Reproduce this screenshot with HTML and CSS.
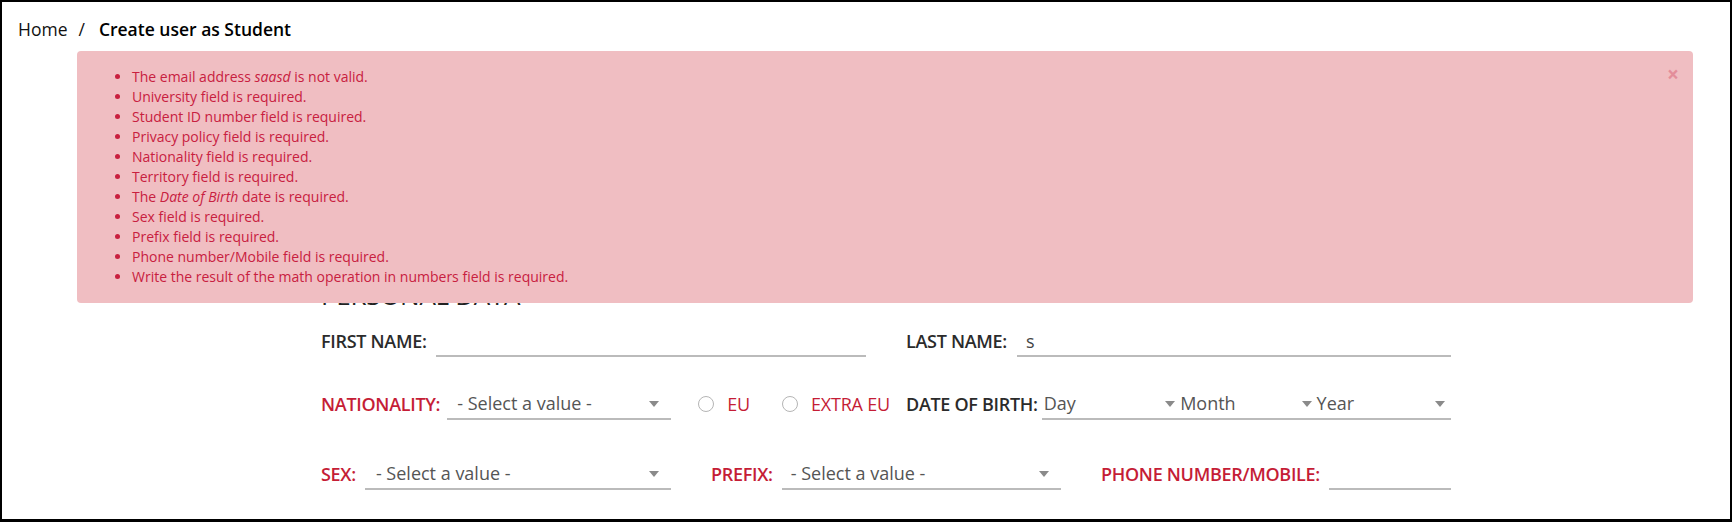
FILE: index.html
```html
<!DOCTYPE html>
<html lang="en">
<head>
<meta charset="utf-8">
<title>Create user as Student</title>
<link rel="stylesheet" href="styles.css">
</head>
<body>
<div class="page">
  <nav class="breadcrumb">
    <a class="crumb" href="#">Home</a><span class="sep">/</span><span class="crumb current">Create user as Student</span>
  </nav>

  <div class="alert" role="alert">
    <button class="close" type="button" aria-label="Close">&times;</button>
    <ul>
      <li>The email address <em>saasd</em> is not valid.</li>
      <li>University field is required.</li>
      <li>Student ID number field is required.</li>
      <li>Privacy policy field is required.</li>
      <li>Nationality field is required.</li>
      <li>Territory field is required.</li>
      <li>The <em>Date of Birth</em> date is required.</li>
      <li>Sex field is required.</li>
      <li>Prefix field is required.</li>
      <li>Phone number/Mobile field is required.</li>
      <li>Write the result of the math operation in numbers field is required.</li>
    </ul>
  </div>

  <form class="form">
    <h2 class="section-title">PERSONAL DATA</h2>

    <div class="row row-2">
      <div class="field">
        <label class="label">FIRST NAME:</label>
        <input class="text-input" type="text" value="">
      </div>
      <div class="field">
        <label class="label label-wide">LAST NAME:</label>
        <input class="text-input input-value" type="text" value="s">
      </div>
    </div>

    <div class="row row-2 row-mid">
      <div class="field">
        <label class="label required label-nat">NATIONALITY:</label>
        <div class="select select-nat">- Select a value -<span class="caret"></span></div>
        <span class="radio radio-first"><span class="radio-dot"></span>EU</span>
        <span class="radio"><span class="radio-dot"></span>EXTRA EU</span>
      </div>
      <div class="field">
        <label class="label label-tight">DATE OF BIRTH:</label>
        <div class="dob">
          <div class="select select-compact">Day<span class="caret"></span></div>
          <div class="select select-compact">Month<span class="caret"></span></div>
          <div class="select select-compact">Year<span class="caret caret-last"></span></div>
        </div>
      </div>
    </div>

    <div class="row row-3 row-last">
      <div class="field">
        <label class="label required">SEX:</label>
        <div class="select">- Select a value -<span class="caret"></span></div>
      </div>
      <div class="field">
        <label class="label required">PREFIX:</label>
        <div class="select select-prefix">- Select a value -<span class="caret"></span></div>
      </div>
      <div class="field">
        <label class="label required">PHONE NUMBER/MOBILE:</label>
        <input class="text-input" type="text" value="">
      </div>
    </div>
  </form>
</div>
</body>
</html>
```

FILE: styles.css
```css
html, body {
  margin: 0;
  padding: 0;
}

body {
  font-family: "Open Sans", "Noto Sans", sans-serif;
  background: #ffffff;
  color: #222;
  border: solid #000;
  border-width: 2px 2px 3px 2px;
  height: 522px;
  box-sizing: border-box;
  overflow: hidden;
}

.page {
  position: relative;
  height: 100%;
}

/* Breadcrumb */
.breadcrumb {
  display: flex;
  align-items: baseline;
  padding: 15px 16px 0;
  font-size: 17.5px;
  line-height: 24px;
  color: #111;
}

.crumb {
  color: #111;
  text-decoration: none;
}

.sep {
  margin: 0 14px 0 11px;
  color: #111;
}

.current {
  font-weight: 600;
  color: #000;
}

/* Alert overlay */
.alert {
  position: absolute;
  left: 75px;
  top: 49px;
  width: 1616px;
  box-sizing: border-box;
  padding: 16px 15px;
  background: #f0bec2;
  color: #c8203f;
  border-radius: 4px;
  font-size: 14px;
  line-height: 20px;
  z-index: 2;
}

.alert ul {
  margin: 0;
  padding-left: 40px;
}

.close {
  position: absolute;
  top: 13px;
  right: 14px;
  padding: 0;
  border: 0;
  background: transparent;
  font-family: "Open Sans", sans-serif;
  font-size: 21px;
  font-weight: 700;
  line-height: 21px;
  color: #c8203f;
  opacity: 0.3;
  cursor: pointer;
}

/* Form */
.form {
  margin: 239px 0 0 319px;
  width: 1130px;
}

.section-title {
  margin: 0 0 16px;
  font-size: 26px;
  line-height: 30px;
  font-weight: 400;
  letter-spacing: -0.3px;
  color: #222;
}

.row {
  display: grid;
  column-gap: 40px;
}

.row-2 {
  grid-template-columns: minmax(0, 1fr) minmax(0, 1fr);
}

.row-3 {
  grid-template-columns: repeat(3, minmax(0, 1fr));
}

.row-mid {
  margin-top: 32px;
}

.row-last {
  margin-top: 39px;
}

.field {
  display: flex;
  align-items: center;
  height: 31px;
  white-space: nowrap;
}

.label {
  flex: none;
  margin-right: 9px;
  font-size: 18px;
  font-weight: 600;
  letter-spacing: -0.3px;
  color: #2b2b2b;
  position: relative;
  top: -1px;
}

.label-wide {
  margin-right: 10px;
}

.label-tight {
  margin-right: 4px;
}

.label-nat {
  margin-right: 7px;
}

.label.required {
  color: #c51d36;
}

.text-input {
  flex: 1;
  min-width: 0;
  height: 31px;
  box-sizing: border-box;
  margin: 0;
  padding: 0 11px;
  border: 0;
  border-bottom: 2px solid #bbbbbb;
  border-radius: 0;
  background: transparent;
  font-family: "Open Sans", sans-serif;
  font-size: 18px;
  color: #444;
  outline: none;
}

.input-value {
  padding-left: 9px;
}

.select {
  position: relative;
  flex: 1;
  min-width: 0;
  height: 31px;
  box-sizing: border-box;
  padding-left: 11px;
  border-bottom: 2px solid #bbbbbb;
  font-size: 18px;
  line-height: 28px;
  color: #555;
}

.select-nat {
  flex: 0 0 224px;
  padding-left: 10px;
}

.select-prefix {
  padding-left: 9px;
}

.caret {
  position: absolute;
  right: 12px;
  top: 12px;
  width: 0;
  height: 0;
  border-left: 5.5px solid transparent;
  border-right: 5.5px solid transparent;
  border-top: 6px solid #8a8a8a;
}

.radio {
  display: flex;
  align-items: center;
  gap: 13px;
  margin-left: 32px;
  font-size: 18px;
  letter-spacing: -0.2px;
  color: #c51d36;
  position: relative;
  top: -1px;
}

.radio-first {
  margin-left: 27px;
}

.radio-dot {
  width: 16px;
  height: 16px;
  box-sizing: border-box;
  border: 1.5px solid #b5b5b5;
  border-radius: 50%;
  background: #fff;
}

.dob {
  flex: 1;
  display: grid;
  grid-template-columns: repeat(3, minmax(0, 1fr));
}

.select-compact {
  padding-left: 2px;
}

.select-compact .caret {
  right: 3px;
}

.select-compact .caret-last {
  right: 6px;
}
```
